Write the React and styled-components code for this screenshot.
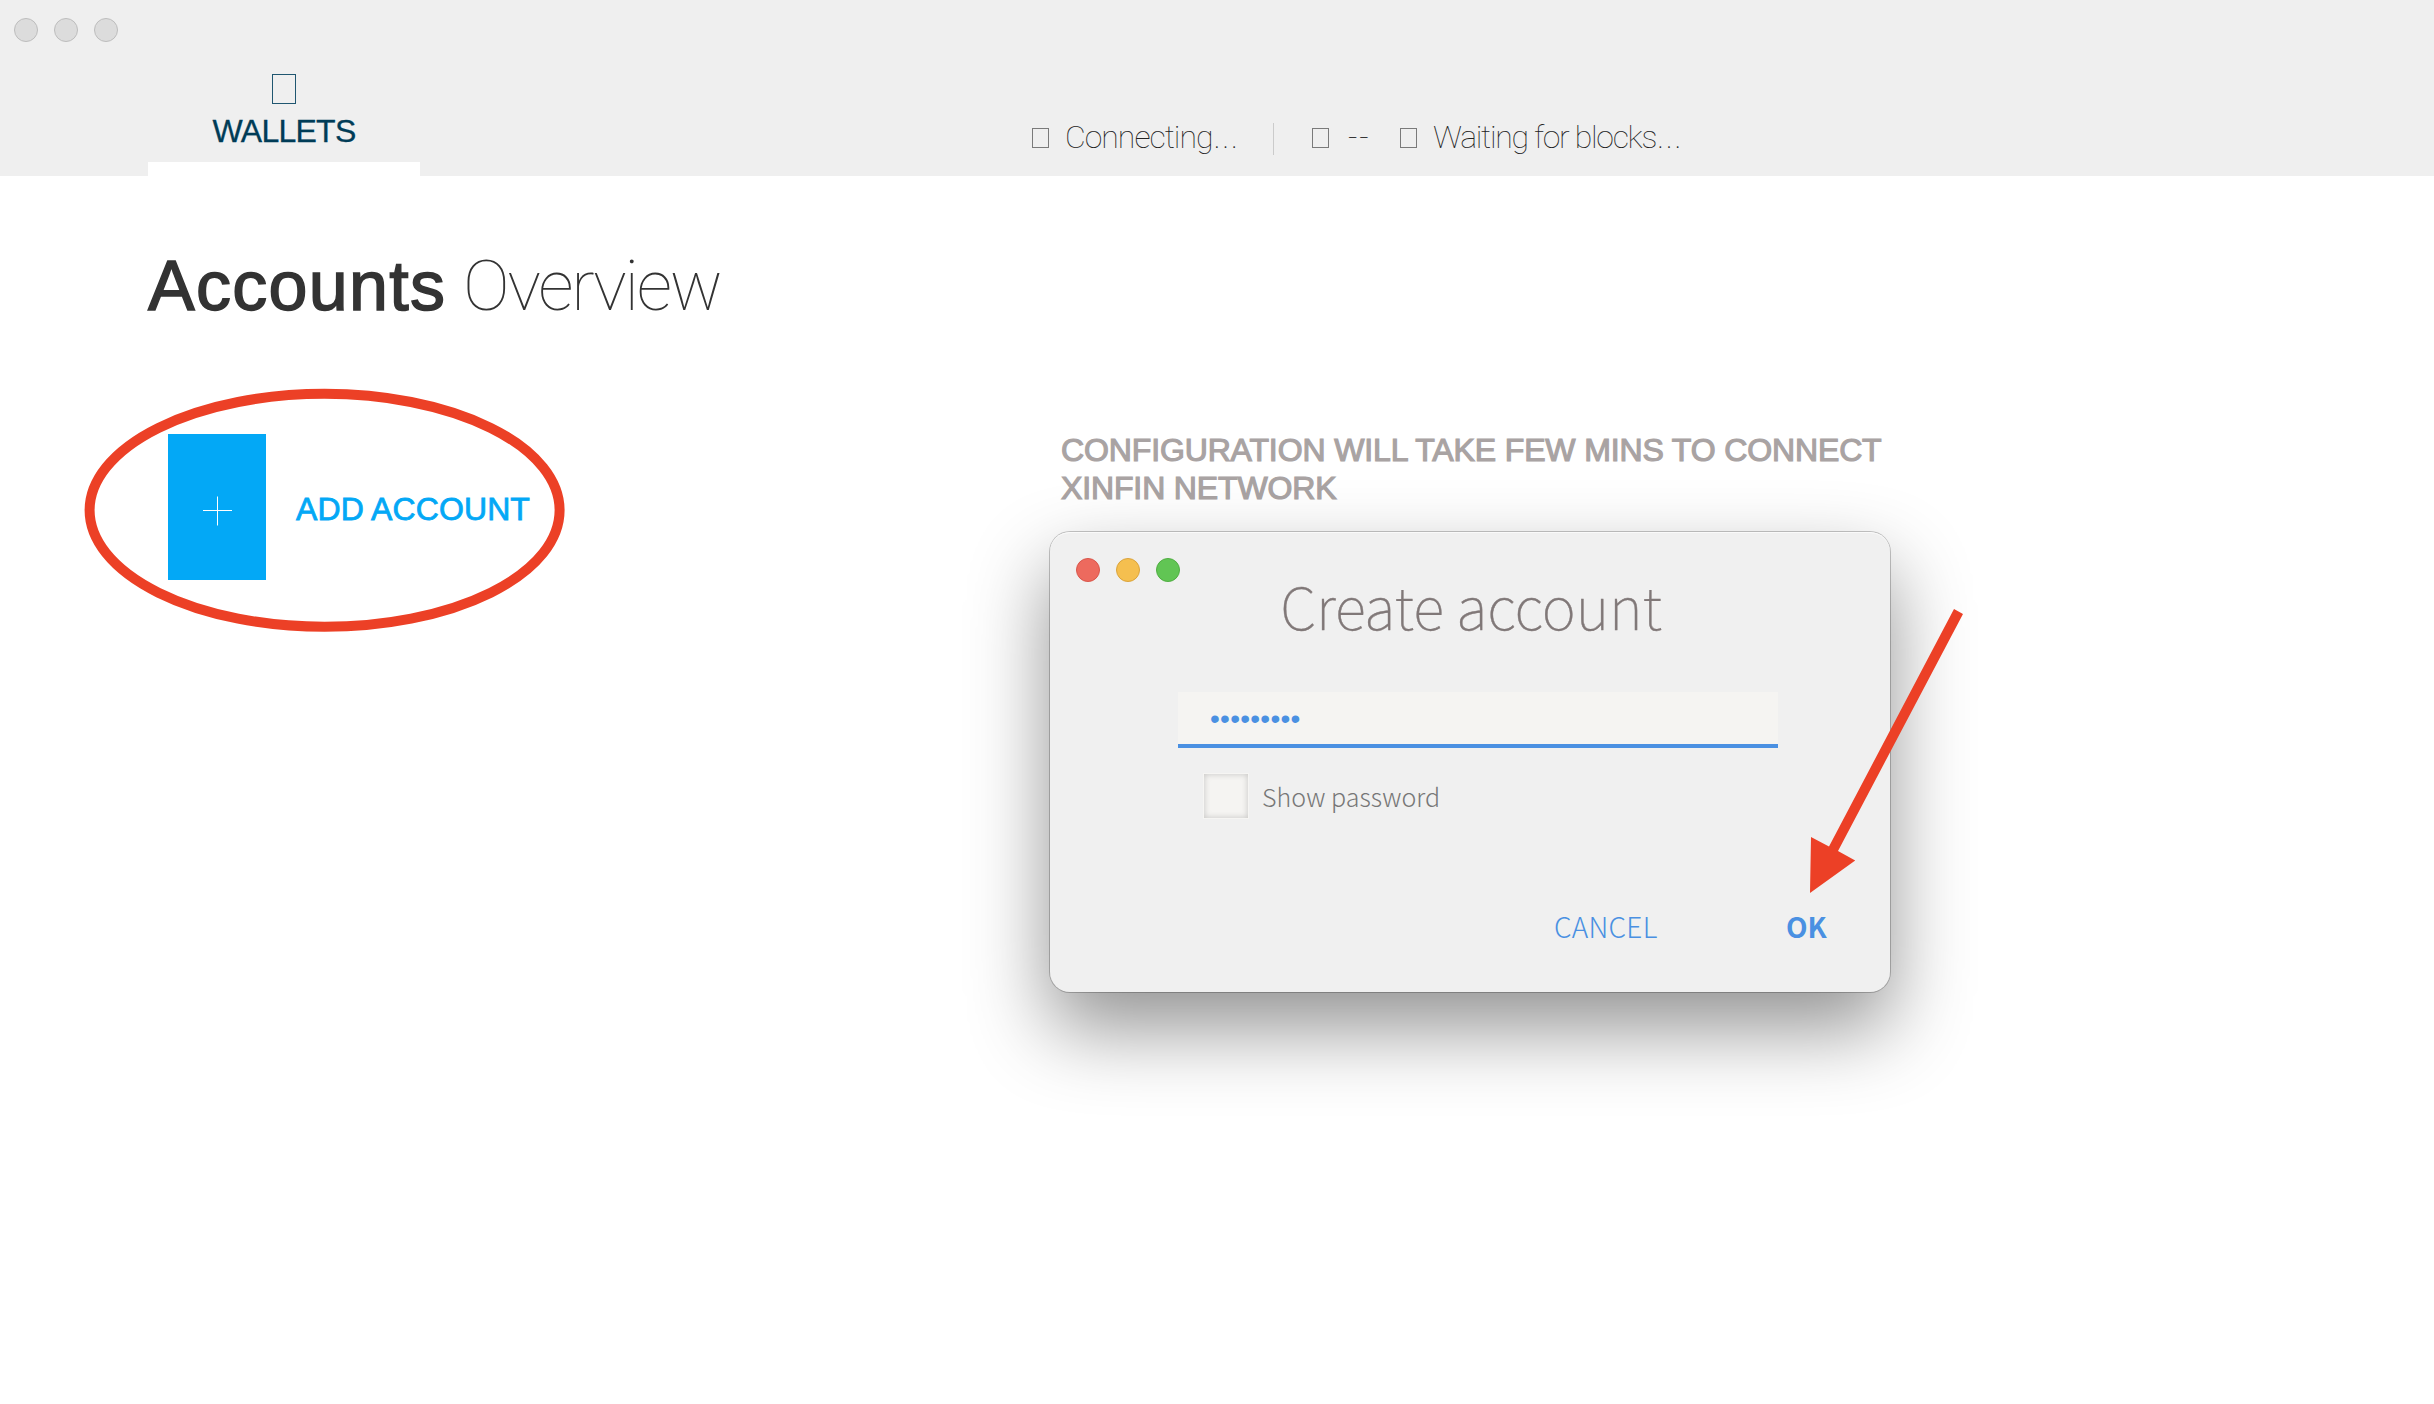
import React from 'react';
import styled, { createGlobalStyle } from 'styled-components';

const helvetica = '"Liberation Sans", Arial, sans-serif';
const thin = 'Roboto, "Liberation Sans", sans-serif';
const source = '"Noto Sans CJK SC", "Noto Sans", sans-serif';

const GlobalStyle = createGlobalStyle`
  *, *::before, *::after { box-sizing: border-box; }
  body { margin: 0; background: #fff; }
`;

const Window = styled.div`
  position: relative;
  width: 2434px;
  height: 1404px;
  overflow: hidden;
  background: #fff;
`;

const Header = styled.header`
  display: flex;
  flex-direction: column;
  height: 176px;
  background: #efefef;
`;

const Lights = styled.div`
  display: flex;
  gap: 16px;
  padding: ${(p) => p.$padding};
`;

const Light = styled.span`
  width: 24px;
  height: 24px;
  border-radius: 50%;
  background: ${(p) => p.$fill};
  border: 1px solid ${(p) => p.$edge};
`;

const HeaderRow = styled.div`
  display: flex;
  flex: 1;
  padding-left: 148px;
`;

const Tab = styled.div`
  display: flex;
  flex-direction: column;
  align-items: center;
  width: 272px;
  padding-top: 32px;
  border-bottom: 14px solid #fff;
  color: #003c57;
`;

const TabGlyph = styled.span`
  width: 24px;
  height: 30px;
  border: 1px solid #1f5670;
`;

const TabLabel = styled.span`
  margin-top: 11px;
  font: 400 32px/32px ${helvetica};
  letter-spacing: -0.75px;
  -webkit-text-stroke: 0.3px #003c57;
`;

const Status = styled.div`
  display: flex;
  align-items: center;
  height: 32px;
  margin: 79px 0 0 612px;
`;

const StatusGlyph = styled.span`
  width: 17px;
  height: 20px;
  margin: 2px 1px 0 0;
  border: 1px solid #7a7a7a;
`;

const StatusLabel = styled.span`
  width: ${(p) => p.$width}px;
  padding-left: ${(p) => p.$inset || 0}px;
  margin-left: 15px;
  font: 100 32px/32px ${thin};
  letter-spacing: ${(p) => p.$tracking}px;
  color: #222;
  white-space: nowrap;
`;

const Ellipsis = styled.span`
  font-family: Inter, sans-serif;
`;

const Divider = styled.span`
  width: 1px;
  height: 32px;
  margin: 4px 38px 0 0;
  background: #cbcbcb;
`;

const Main = styled.main`
  padding: 70px 0 0 148px;
`;

const Title = styled.h1`
  margin: 0;
  font: 400 70px/80px ${helvetica};
  letter-spacing: 1.3px;
  color: #333;
  -webkit-text-stroke: 1.5px #333;
  white-space: nowrap;

  em {
    margin-left: -4px;
    font: 100 70px/80px ${thin};
    letter-spacing: -2.2px;
    -webkit-text-stroke: 0;
  }
`;

const Columns = styled.div`
  display: grid;
  grid-template-columns: 913px 840px;
`;

const AddAccount = styled.div`
  display: flex;
  align-items: center;
  gap: 30px;
  height: 146px;
  margin: 108px 0 0 20px;
`;

const AddTile = styled.span`
  display: flex;
  align-items: center;
  justify-content: center;
  width: 98px;
  height: 146px;
  padding-top: 8px;
  background: #03a8f6;
`;

const AddLabel = styled.span`
  padding-top: 3px;
  font: 400 32px/32px ${helvetica};
  letter-spacing: 0.1px;
  color: #03a8f6;
  -webkit-text-stroke: 0.8px #03a8f6;
`;

const Notice = styled.p`
  margin: 105px 0 0;
  font: 400 32px/38px ${helvetica};
  letter-spacing: -0.13px;
  color: #a9a3a3;
  -webkit-text-stroke: 1.2px #a9a3a3;
`;

const Dialog = styled.section`
  position: absolute;
  left: 1050px;
  top: 532px;
  display: flex;
  flex-direction: column;
  width: 840px;
  height: 460px;
  border-radius: 20px;
  background: #f0f0f0;
  box-shadow: inset 0 1px 0 #fafafa, 0 0 0 1px rgba(0, 0, 0, 0.22),
    0 36px 80px rgba(0, 0, 0, 0.43);
`;

const DialogTitle = styled.h2`
  margin: 0;
  padding-left: 2px;
  font: 100 58px/46px ${source};
  letter-spacing: -0.15px;
  text-align: center;
  color: #807878;
  -webkit-text-stroke: 0.4px #807878;
`;

const Password = styled.div`
  width: 600px;
  height: 56px;
  margin: 64px 0 0 128px;
  padding: 3px 0 0 32px;
  background: #f5f4f2;
  border-bottom: 4px solid #4a90e2;
  font: 400 28px/48px ${helvetica};
  letter-spacing: 0.26px;
  color: #4a90e2;
`;

const CheckRow = styled.label`
  display: flex;
  align-items: center;
  gap: 13px;
  height: 46px;
  margin: 25px 0 0 153px;
  font: 300 25px/44px ${source};
  letter-spacing: 0.05px;
  color: #777;
`;

const CheckBox = styled.span`
  width: 46px;
  height: 46px;
  border: 1px solid #f6f5f3;
  background: #f5f4f2;
  box-shadow: inset 0 0 6px rgba(0, 0, 0, 0.2);
`;

const Actions = styled.div`
  display: flex;
  margin: 93px 0 0 504px;
`;

const Action = styled.button`
  width: ${(p) => p.$width}px;
  padding: 0;
  border: 0;
  background: none;
  font: ${(p) => p.$weight} 28px/28px ${source};
  letter-spacing: ${(p) => p.$tracking}px;
  text-align: left;
  color: #4a90e2;
`;

const Markup = styled.svg`
  position: absolute;
  left: ${(p) => p.$x}px;
  top: ${(p) => p.$y}px;
`;

const MacLights = ({ padding, colors }) => (
  <Lights $padding={padding}>
    {colors.map(([fill, edge], i) => (
      <Light key={i} $fill={fill} $edge={edge} />
    ))}
  </Lights>
);

const inactive = ['#dcdcdc', '#bdbdbd'];

export default function App() {
  return (
    <Window>
      <GlobalStyle />
      <Header>
        <MacLights padding="18px 0 0 14px" colors={[inactive, inactive, inactive]} />
        <HeaderRow>
          <Tab>
            <TabGlyph />
            <TabLabel>WALLETS</TabLabel>
          </Tab>
          <Status>
            <StatusGlyph />
            <StatusLabel $width={208} $tracking={-1}>
              Connecting<Ellipsis>…</Ellipsis>
            </StatusLabel>
            <Divider />
            <StatusGlyph />
            <StatusLabel $width={55} $inset={3} $tracking={1.8}>--</StatusLabel>
            <StatusGlyph />
            <StatusLabel $width={260} $tracking={-1.3}>
              Waiting for blocks<Ellipsis>…</Ellipsis>
            </StatusLabel>
          </Status>
        </HeaderRow>
      </Header>
      <Main>
        <Title>
          Accounts <em>Overview</em>
        </Title>
        <Columns>
          <AddAccount>
            <AddTile>
              <svg width="30" height="30" viewBox="0 0 30 30" stroke="#fff" strokeWidth="1">
                <path d="M15.5 0.5V29.5M1 14.5H30" />
              </svg>
            </AddTile>
            <AddLabel>ADD ACCOUNT</AddLabel>
          </AddAccount>
          <Notice>CONFIGURATION WILL TAKE FEW MINS TO CONNECT XINFIN NETWORK</Notice>
        </Columns>
      </Main>
      <Dialog>
        <MacLights
          padding="26px 0 0 26px"
          colors={[['#ed6a5e', '#d9564b'], ['#f5bf4f', '#dba43c'], ['#61c554', '#50ae42']]}
        />
        <DialogTitle>Create account</DialogTitle>
        <Password>•••••••••</Password>
        <CheckRow>
          <CheckBox />
          Show password
        </CheckRow>
        <Actions>
          <Action $weight={300} $width={232} $tracking={0.25}>CANCEL</Action>
          <Action $weight={700} $width={50} $tracking={0}>OK</Action>
        </Actions>
      </Dialog>
      <Markup $x={80} $y={384} width="490" height="254">
        <ellipse cx="244.6" cy="126.3" rx="235" ry="116.5" fill="none" stroke="#ec4026" strokeWidth="10" />
      </Markup>
      <Markup $x={1800} $y={600} width="170" height="300" fill="#ec4026">
        <path d="M154 9L163 14L38 251L55.2 260.5L10 293L11 237L29 246.5Z" />
      </Markup>
    </Window>
  );
}
